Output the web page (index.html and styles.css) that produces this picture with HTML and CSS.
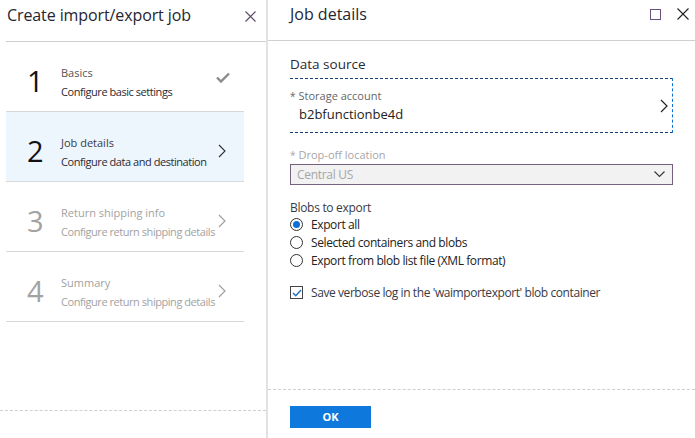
FILE: index.html
```html
<!DOCTYPE html>
<html>
<head>
<meta charset="utf-8">
<link rel="stylesheet" href="styles.css">
</head>
<body>
<div class="app">
  <section class="left">
    <header class="left-head">
      <h1 class="title">Create import/export job</h1>
      <svg class="close" width="11" height="11" viewBox="0 0 11 11"><path d="M0.5 0.5L10.5 10.5M10.5 0.5L0.5 10.5" stroke="#5b4a6b" stroke-width="1.1" fill="none"/></svg>
    </header>
    <ul class="steps">
      <li class="step">
        <span class="num">1</span>
        <div class="stext"><div class="sname">Basics</div><div class="sdesc">Configure basic settings</div></div>
        <svg class="sicon check-icon" width="14" height="11" viewBox="0 0 14 11"><path d="M1 5.5L5 9.5L13 1.5" stroke="#8a8a8a" stroke-width="2.4" fill="none"/></svg>
      </li>
      <li class="step active">
        <span class="num">2</span>
        <div class="stext"><div class="sname">Job details</div><div class="sdesc">Configure data and destination</div></div>
        <svg class="sicon" width="8" height="14" viewBox="0 0 8 14"><path d="M1 1L7 7L1 13" stroke="#2d2d3a" stroke-width="1.1" fill="none"/></svg>
      </li>
      <li class="step disabled">
        <span class="num">3</span>
        <div class="stext"><div class="sname">Return shipping info</div><div class="sdesc">Configure return shipping details</div></div>
        <svg class="sicon" width="8" height="14" viewBox="0 0 8 14"><path d="M1 1L7 7L1 13" stroke="#9a9a9a" stroke-width="1.1" fill="none"/></svg>
      </li>
      <li class="step disabled">
        <span class="num">4</span>
        <div class="stext"><div class="sname">Summary</div><div class="sdesc">Configure return shipping details</div></div>
        <svg class="sicon" width="8" height="14" viewBox="0 0 8 14"><path d="M1 1L7 7L1 13" stroke="#9a9a9a" stroke-width="1.1" fill="none"/></svg>
      </li>
    </ul>
    <footer class="left-foot"></footer>
  </section>
  <section class="right">
    <header class="right-head">
      <h2 class="title2">Job details</h2>
      <div class="win-btns">
        <svg width="11" height="11" viewBox="0 0 11 11"><rect x="0.5" y="0.5" width="10" height="10" stroke="#6b4f7e" fill="none"/></svg>
        <svg width="12" height="12" viewBox="0 0 12 12"><path d="M0.5 0.5L11.5 11.5M11.5 0.5L0.5 11.5" stroke="#222" stroke-width="1.1" fill="none"/></svg>
      </div>
    </header>
    <div class="content">
      <div class="section-title">Data source</div>
      <div class="picker">
        <div class="picker-text">
          <div class="label"><span class="star">*</span>Storage account</div>
          <div class="value">b2bfunctionbe4d</div>
        </div>
        <svg width="8" height="14" viewBox="0 0 8 14"><path d="M1 1L7 7L1 13" stroke="#222" stroke-width="1.2" fill="none"/></svg>
      </div>
      <div class="label muted drop-label"><span class="star">*</span>Drop-off location</div>
      <div class="select">
        <span>Central US</span>
        <svg width="11" height="7" viewBox="0 0 11 7"><path d="M0.5 0.5L5.5 5.5L10.5 0.5" stroke="#333" stroke-width="1.1" fill="none"/></svg>
      </div>
      <div class="group-label">Blobs to export</div>
      <div class="radios">
        <label class="radio"><span class="dot checked"></span>Export all</label>
        <label class="radio"><span class="dot"></span>Selected containers and blobs</label>
        <label class="radio"><span class="dot"></span>Export from blob list file (XML format)</label>
      </div>
      <label class="check">
        <span class="box"><svg width="10" height="8" viewBox="0 0 10 8"><path d="M1 4L3.8 6.8L9 1" stroke="#1a6fc9" stroke-width="1.4" fill="none"/></svg></span>
        Save verbose log in the 'waimportexport' blob container
      </label>
    </div>
    <footer class="right-foot">
      <button class="ok">OK</button>
    </footer>
  </section>
</div>
</body>
</html>
```
FILE: styles.css
```css
* { box-sizing: border-box; }
html, body { margin: 0; padding: 0; background: #fff; }
body { font-family: "Open Sans", "Noto Sans", sans-serif; color: #2a2a33; }
.app { display: flex; width: 695px; height: 438px; overflow: hidden; }

.left { width: 268px; border-right: 2px solid #e2e2e2; display: flex; flex-direction: column; }
.left-head { height: 42px; margin-left: 6px; border-bottom: 1px solid #cfcfcf; display: flex; align-items: flex-start; justify-content: space-between; padding: 3px 10px 0 1px; }
.title { margin: 0; font-size: 16px; line-height: 24px; font-weight: 400; color: #252530; letter-spacing: -0.1px; }
.close { margin-top: 8px; }

.steps { list-style: none; margin: 0 22px 0 6px; padding: 0; }
.step { height: 70px; border-bottom: 1px solid #d8d8d8; display: flex; align-items: flex-start; padding: 21px 0 0 21px; }
.step.active { background: #eef6fd; }
.num { width: 34px; flex-shrink: 0; font-size: 29px; line-height: 1; color: #111; font-weight: 400; margin-top: 3px; }
.stext { flex: 1; min-width: 0; white-space: nowrap; }
.sname { font-size: 11px; color: #555; line-height: 19px; }
.sdesc { font-size: 11px; color: #2a2a33; line-height: 19px; letter-spacing: -0.45px; }
.step.active .sname { color: #3a3a44; }
.step.disabled .num, .step.disabled .sname, .step.disabled .sdesc { color: #a2a2a2; }
.sicon { flex-shrink: 0; margin: 11px 18px 0 2px; }
.step .check-icon { margin: 9px 14px 0 0; }

.left-foot { margin-top: auto; height: 28px; border-top: 1px dashed #cfcfcf; }

.right { flex: 1; display: flex; flex-direction: column; }
.right-head { height: 41px; border-bottom: 1px solid #cfcfcf; display: flex; align-items: flex-start; justify-content: space-between; padding: 3px 6px 0 22px; }
.title2 { margin: 0; font-size: 16px; line-height: 22px; font-weight: 400; color: #252530; }
.win-btns { display: flex; align-items: center; gap: 16px; margin-top: 5px; }

.content { padding: 14px 22px 0 22px; flex: 1; }
.section-title { font-size: 13.5px; color: #2a2a33; line-height: 18px; }
.picker { margin-top: 5px; height: 55px; border-top: 1px dashed #173f75; border-bottom: 1px dashed #173f75; border-right: 1px dashed #0a6fd6; display: flex; align-items: center; padding: 0 4px 0 0; }
.picker-text { flex: 1; }
.label { font-size: 11px; color: #666; line-height: 14px; }
.star { margin-right: 3px; font-size: 10px; }
.value { font-size: 13px; color: #222; line-height: 18px; padding-left: 9px; margin-top: 2px; }
.muted { color: #a6a6a6; }
.drop-label { margin-top: 15px; }
.select { margin-top: 2px; height: 21px; background: #f2f2f2; border: 1px solid #76607f; display: flex; align-items: center; justify-content: space-between; padding: 0 7px 0 6px; font-size: 12px; color: #a6a6a6; letter-spacing: -0.3px; }
.group-label { margin-top: 15px; font-size: 12px; color: #3a3a44; line-height: 16px; letter-spacing: -0.3px; }
.radios { display: flex; flex-direction: column; margin-top: -1px; }
.radio { display: flex; align-items: center; height: 18px; font-size: 12px; color: #222; letter-spacing: -0.4px; }
.dot { width: 13px; height: 13px; border: 1px solid #333; border-radius: 50%; margin-right: 8px; position: relative; background: #fff; }
.dot.checked::after { content: ""; position: absolute; left: 2px; top: 2px; width: 7px; height: 7px; border-radius: 50%; background: #0f6fd6; }
.check { display: flex; align-items: center; margin-top: 15px; font-size: 12px; color: #3a3a44; letter-spacing: -0.42px; }
.box { width: 13px; height: 13px; border: 1px solid #444; margin-right: 8px; display: flex; align-items: center; justify-content: center; }

.right-foot { height: 49px; border-top: 1px dashed #cfcfcf; padding: 14px 0 0 22px; }
.ok { width: 81px; height: 22px; background: #0f78dc; border: none; color: #fff; font-family: "Open Sans", sans-serif; font-weight: 700; font-size: 11px; padding: 0; }
```
